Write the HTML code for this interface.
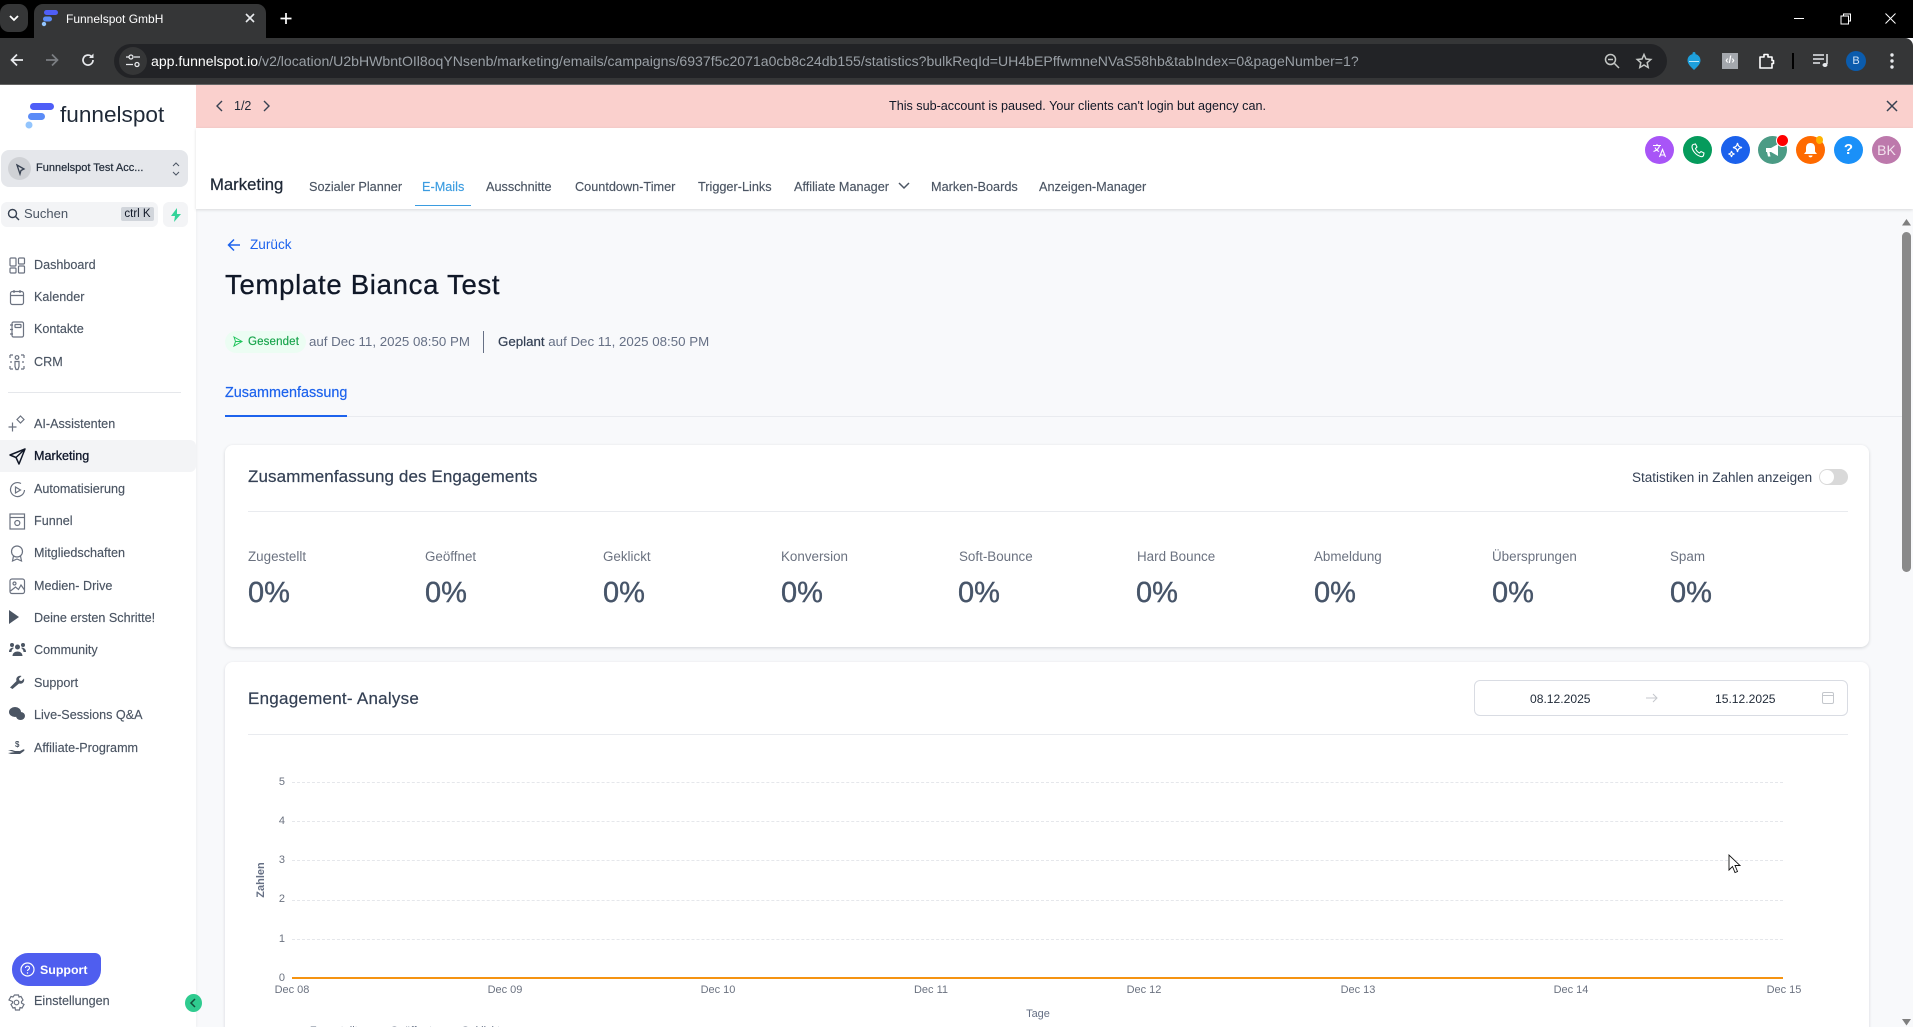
<!DOCTYPE html>
<html lang="de"><head><meta charset="utf-8"><title>Funnelspot GmbH</title>
<style>
html,body{margin:0;padding:0;width:1913px;height:1027px;overflow:hidden;background:#f8f9fb;font-family:"Liberation Sans",sans-serif}
#w{position:relative;width:1913px;height:1027px;overflow:hidden;background:#f8f9fb}
.a,.t{position:absolute}
.t{white-space:nowrap;line-height:20px}
svg{position:absolute;overflow:visible}
.n{left:34px;font-size:12.600px;color:#4b5563;-webkit-text-stroke:.15px #4b5563}
.h{top:177px;font-size:12.700px;color:#4b5563;-webkit-text-stroke:.15px #4b5563}
.l{top:547px;font-size:13.400px;color:#6b7280}
.v{top:579px;font-size:29px;color:#475569;line-height:28px;-webkit-text-stroke:.4px #475569}
.c{width:29px;height:28px;top:136px;border-radius:50%}
.y{font-size:11px;color:#6b7280;width:20px;text-align:right;left:265px}
.x{top:980px;font-size:11px;color:#6b7280;width:60px;text-align:center}
.g{left:292px;width:1491px;height:0;border-top:1px dashed #e5e7eb}
.s{fill:none;stroke:#6b7280;stroke-width:1.2}
</style></head><body><div id="w">

<!-- browser chrome -->
<div class="a" style="left:0;top:0;width:1913px;height:38px;background:#000"></div>
<div class="a" style="left:0;top:38px;width:1913px;height:46px;background:#353637;border-radius:0 8px 0 0"></div>
<div class="a" style="left:0;top:84px;width:1913px;height:1px;background:#666"></div>
<div class="a" style="left:0;top:4px;width:28px;height:28px;background:#353637;border-radius:9px"></div>
<svg style="left:0;top:0" width="30" height="38"><path d="M10 16l4 4 4-4" fill="none" stroke="#fff" stroke-width="1.8"/></svg>
<div class="a" style="left:34px;top:4px;width:232px;height:34px;background:#353637;border-radius:9px 9px 0 0"></div>
<svg style="left:40px;top:8px" width="20" height="20"><rect x="4" y="2" width="14" height="5" rx="2.5" fill="#4f5ef7"/><rect x="3" y="8.500" width="9" height="5" rx="2.500" fill="#5b8cf7"/><circle cx="4" cy="16" r="2.200" fill="#93c5fd"/></svg>
<div class="t" style="left:66px;top:9px;font-size:12px;color:#fff">Funnelspot GmbH</div>
<svg style="left:244px;top:12px" width="12" height="12"><path d="M2 2l8 8M10 2l-8 8" stroke="#e8eaed" stroke-width="1.600"/></svg>
<svg style="left:279px;top:12px" width="14" height="14"><path d="M7 1v11M1.500 6.500h11" stroke="#fff" stroke-width="1.700"/></svg>

<svg style="left:9px;top:52px" width="16" height="16"><path d="M14 8H2.500M8 2.500L2.500 8 8 13.500" fill="none" stroke="#e8eaed" stroke-width="1.700"/></svg>
<svg style="left:44px;top:52px" width="16" height="16"><path d="M2 8h11.500M8 2.500L13.500 8 8 13.500" fill="none" stroke="#7b7e82" stroke-width="1.700"/></svg>
<svg style="left:80px;top:52px" width="16" height="16"><path d="M13 8a5 5 0 1 1-1.500-3.500" fill="none" stroke="#e8eaed" stroke-width="1.700"/><path d="M13.500 1.500v4.500H9z" fill="#e8eaed"/></svg>

<div class="a" style="left:114px;top:44px;width:1553px;height:34px;background:#222326;border-radius:17px"></div>
<div class="a" style="left:119px;top:47px;width:28px;height:28px;background:#353637;border-radius:50%"></div>
<svg style="left:125px;top:53px" width="16" height="16"><path d="M1 4h3M9 4h6M1 11.500h7" stroke="#e8eaed" stroke-width="1.300"/><circle cx="6" cy="4" r="2" fill="none" stroke="#e8eaed" stroke-width="1.300"/><circle cx="12" cy="11.500" r="2" fill="none" stroke="#e8eaed" stroke-width="1.300"/></svg>
<div class="t" style="left:151px;top:51px;font-size:14.070px;color:#9aa0a6"><span style="color:#fff">app.funnelspot.io</span>/v2/location/U2bHWbntOIl8oqYNsenb/marketing/emails/campaigns/6937f5c2071a0cb8c24db155/statistics?bulkReqId=UH4bEPffwmneNVaS58hb&amp;tabIndex=0&amp;pageNumber=1?</div>
<svg style="left:1604px;top:53px" width="16" height="16"><circle cx="6.500" cy="6.500" r="5" fill="none" stroke="#c4c7c5" stroke-width="1.500"/><path d="M10.500 10.500l4.500 4.500M4 6.500h5" stroke="#c4c7c5" stroke-width="1.500"/></svg>
<svg style="left:1636px;top:53px" width="16" height="16"><path d="M8 1.500l2 4.500 4.800.5-3.600 3.200 1 4.800L8 12l-4.200 2.500 1-4.800L1.200 6.500 6 6z" fill="none" stroke="#c4c7c5" stroke-width="1.500"/></svg>
<svg style="left:1686px;top:51px" width="16" height="20"><path d="M8 3c4 0 6.500 3 6.500 6.500S11 16 8 19C5 16 1.500 13 1.500 9.500S4 3 8 3z" fill="#1ea0dc"/><circle cx="8" cy="2.500" r="1.500" fill="#1ea0dc"/><path d="M3 10.500h10" stroke="#bfe8f7" stroke-width="1"/></svg>
<div class="a" style="left:1722px;top:53px;width:16px;height:16px;background:#a4a8ad"></div>
<div class="t" style="left:1722px;top:51px;width:16px;text-align:center;font-size:10px;font-weight:bold;color:#fff">‹/›</div>
<svg style="left:1759px;top:53px" width="16" height="16"><path d="M1 4h4V1.500h4V4h4v3.500h1.500v3H13V15H1z" fill="none" stroke="#fff" stroke-width="1.600" stroke-linejoin="round"/></svg>
<div class="a" style="left:1792px;top:53px;width:2px;height:16px;background:#000"></div>
<svg style="left:1813px;top:53px" width="18" height="16"><path d="M0 2h11M0 6h11M0 10h7" stroke="#e8eaed" stroke-width="1.500"/><path d="M14 1v10" stroke="#e8eaed" stroke-width="1.500"/><ellipse cx="12" cy="12" rx="2.500" ry="2" fill="#e8eaed"/></svg>
<div class="a" style="left:1846px;top:51px;width:20px;height:20px;background:#0b5cad;border-radius:50%;color:#cfe3f7;font-size:11px;line-height:20px;text-align:center">B</div>
<svg style="left:1889px;top:52px" width="6" height="18"><circle cx="3" cy="3" r="1.700" fill="#e8eaed"/><circle cx="3" cy="9" r="1.700" fill="#e8eaed"/><circle cx="3" cy="15" r="1.700" fill="#e8eaed"/></svg>
<div class="a" style="left:1794px;top:18px;width:10px;height:1px;background:#fff"></div>
<svg style="left:1840px;top:13px" width="12" height="12"><path d="M3.500 3V1h7v7H8.500M1 3h7.500v8H1z" fill="none" stroke="#fff"/></svg>
<svg style="left:1885px;top:13px" width="12" height="12"><path d="M.5.500l10 10M10.500.500l-10 10" stroke="#fff"/></svg>

<!-- sidebar -->
<div class="a" style="left:0;top:85px;width:196px;height:942px;background:#fff;box-shadow:1px 0 2px rgba(0,0,0,.04)"></div>
<svg style="left:25px;top:101px" width="28" height="28"><rect x="5" y="2" width="24" height="7" rx="3.500" fill="#4f5ef7"/><rect x="3" y="12" width="17" height="7" rx="3.500" fill="#5b8cf7"/><circle cx="4" cy="24" r="3.500" fill="#93c5fd"/></svg>
<div class="t" style="left:60px;top:100px;line-height:30px;font-size:22.600px;color:#1f2937">funnelspot</div>
<div class="a" style="left:1px;top:150px;width:187px;height:37px;background:#e5e7eb;border-radius:8px"></div>
<div class="a" style="left:8px;top:157px;width:23px;height:23px;background:#cfd1d5;border-radius:50%"></div>
<svg style="left:14px;top:163px" width="12" height="12"><path d="M3 2l7 4-3 1.500L6 11z" fill="none" stroke="#374151" stroke-width="1.300"/></svg>
<div class="t" style="left:36px;top:158px;font-size:11px;color:#1f2937;-webkit-text-stroke:.2px #1f2937">Funnelspot Test Acc...</div>
<svg style="left:171px;top:161px" width="10" height="16"><path d="M2 5l3-3 3 3M2 11l3 3 3-3" fill="none" stroke="#4b5563" stroke-width="1"/></svg>

<div class="a" style="left:1px;top:202px;width:157px;height:25px;background:#f3f4f6;border-radius:6px"></div>
<svg style="left:7px;top:208px" width="13" height="13"><circle cx="5.500" cy="5.500" r="4" fill="none" stroke="#374151" stroke-width="1.400"/><path d="M8.500 8.500l3.500 3.500" stroke="#374151" stroke-width="1.400"/></svg>
<div class="t" style="left:24px;top:204px;font-size:13px;color:#4b5563">Suchen</div>
<div class="a" style="left:121px;top:207px;width:33px;height:14px;background:#d1d5db;border-radius:2px;font-size:11.500px;line-height:14px;color:#111827;text-align:center">ctrl K</div>
<div class="a" style="left:163px;top:202px;width:25px;height:25px;background:#f3f4f6;border-radius:6px"></div>
<svg style="left:170px;top:208px" width="12" height="14"><path d="M7 0L1 8h4l-1 6 7-8H7z" fill="#34d399"/></svg>

<div class="t n" style="top:255px">Dashboard</div>
<svg style="left:9px;top:257px" width="17" height="17"><g class="s"><rect x="1" y="1" width="6" height="8" rx="1"/><rect x="9.500" y="1" width="6" height="6" rx="1"/><rect x="1" y="11" width="6" height="5" rx="1"/><rect x="9.500" y="9" width="6" height="7" rx="1"/></g></svg>
<div class="t n" style="top:287px">Kalender</div>
<svg style="left:9px;top:289px" width="17" height="17"><g class="s"><rect x="1.500" y="2.500" width="13" height="13" rx="2"/><path d="M1.500 6.500h13M5 1v3M11 1v3"/></g></svg>
<div class="t n" style="top:319px">Kontakte</div>
<svg style="left:9px;top:321px" width="17" height="17"><g class="s"><rect x="3" y="1" width="11.500" height="15" rx="1.500"/><rect x="6" y="3.500" width="6" height="3" rx=".5"/><path d="M1 4h3M1 8.500h3M1 13h3"/></g></svg>
<div class="t n" style="top:352px">CRM</div>
<svg style="left:9px;top:354px" width="17" height="17"><g class="s"><circle cx="8" cy="3.500" r="1.800"/><path d="M6 7.500h4v5l-1 3H7l-1-3zM1 1h3M1 1v3M12 1h3M15 1v3M1 15h3M1 15v-3M15 15h-3M15 15v-3M1 8h2M13 8h2"/></g></svg>

<div class="a" style="left:8px;top:392px;width:173px;height:1px;background:#e5e7eb"></div>

<div class="t n" style="top:414px">AI-Assistenten</div>
<svg style="left:8px;top:415px" width="18" height="18"><g class="s"><path d="M12.500 1l3.500 3.500-3.500 3.500L9 4.500z"/><path d="M4.500 7.500v9M.5 12h8"/></g></svg>
<div class="a" style="left:0;top:440px;width:196px;height:32px;background:#f3f4f6;border-radius:0 6px 6px 0"></div>
<div class="t n" style="top:446px;color:#0f172a;-webkit-text-stroke:.3px #0f172a">Marketing</div>
<svg style="left:9px;top:448px" width="17" height="17"><path d="M16 1L1 7l6 2.500L10 16zM7 9.500L16 1" fill="none" stroke="#111827" stroke-width="1.500" stroke-linejoin="round"/></svg>
<div class="t n" style="top:479px">Automatisierung</div>
<svg style="left:9px;top:481px" width="17" height="17"><g class="s"><path d="M12 2.500A7 7 0 1 0 15.500 9"/><path d="M6.500 6l5 3-5 3z"/></g></svg>
<div class="t n" style="top:511px">Funnel</div>
<svg style="left:9px;top:513px" width="17" height="17"><g class="s"><rect x="1" y="1" width="14.500" height="15"/><path d="M1 4.500h14.500"/><circle cx="8.300" cy="10" r="2.500"/></g></svg>
<div class="t n" style="top:543px">Mitgliedschaften</div>
<svg style="left:9px;top:545px" width="17" height="17"><g class="s"><circle cx="8" cy="6.500" r="5.500"/><path d="M4.500 11l-1 5 4.500-2 4.500 2-1-5"/></g></svg>
<div class="t n" style="top:576px">Medien- Drive</div>
<svg style="left:9px;top:578px" width="17" height="17"><g class="s"><rect x="1" y="1" width="14.500" height="14.500" rx="2"/><circle cx="5.500" cy="5.500" r="1.500"/><path d="M1.500 13l5-4 3 2.500 2.500-4.500 3.500 5"/></g></svg>
<div class="t n" style="top:608px">Deine ersten Schritte!</div>
<svg style="left:9px;top:610px" width="12" height="14"><path d="M0 0l10 7-10 7z" fill="#4b5563"/></svg>
<div class="t n" style="top:640px">Community</div>
<svg style="left:9px;top:642px" width="17" height="15"><g fill="#4b5563"><circle cx="8.500" cy="5" r="2.500"/><circle cx="3" cy="3" r="2"/><circle cx="14" cy="3" r="2"/><path d="M3.500 14c0-6 10-6 10 0zM0 10c0-4 4-5 5-4-2 1-2.500 3-2.500 4zM17 10c0-4-4-5-5-4 2 1 2.500 3 2.500 4z"/></g></svg>
<div class="t n" style="top:673px">Support</div>
<svg style="left:9px;top:674px" width="15" height="15"><path d="M1 13.500l6.500-6.500c-1-3 1.500-6 5-5l-2.500 2.500.5 2 2 .5 2.500-2.500c1 3.500-2 6-5 5L3.500 15z" fill="#4b5563"/></svg>
<div class="t n" style="top:705px">Live-Sessions Q&amp;A</div>
<svg style="left:9px;top:707px" width="16" height="14"><g fill="#4b5563"><ellipse cx="6" cy="5" rx="6" ry="5"/><ellipse cx="11.500" cy="9" rx="4.500" ry="4"/></g></svg>
<div class="t n" style="top:738px">Affiliate-Programm</div>
<svg style="left:8px;top:739px" width="17" height="16"><path d="M0 11h4l3 1h4c1 0 1 1 0 1.500H7.500M11 12.500l4-2c1.500-.5 2 .5 1 1.500l-4 3H3l-3-1z" fill="#4b5563"/><text x="7" y="8" font-size="8" font-weight="bold" fill="#4b5563" font-family="Liberation Sans">$</text></svg>

<div class="a" style="left:12px;top:953px;width:89px;height:33px;background:#4f5eef;border-radius:16px 6px 16px 16px"></div>
<svg style="left:20px;top:962px" width="15" height="15"><circle cx="7.500" cy="7.500" r="6.500" fill="none" stroke="#fff" stroke-width="1.200"/><path d="M5.500 6c0-2.500 4-2.500 4 0 0 1.500-2 1.500-2 3" fill="none" stroke="#fff" stroke-width="1.100"/><circle cx="7.500" cy="11" r=".7" fill="#fff"/></svg>
<div class="t" style="left:40px;top:960px;font-size:12.400px;font-weight:bold;color:#fff">Support</div>
<div class="t n" style="top:991px">Einstellungen</div>
<svg style="left:8px;top:994px" width="17" height="17"><g class="s"><path d="M6.500 1h4l.5 2 2-.5 2 3.500-1.500 1.500v1.500L16 10.500l-2 3.500-2-.5-.5 2.500h-4l-.5-2.500-2 .5-2-3.500 1.500-1.500V7.500L1 6l2-3.500 2 .5z"/><circle cx="8.500" cy="8.500" r="2.300"/></g></svg>
<div class="a" style="left:185px;top:994px;width:17px;height:18px;background:#2fcb8f;border-radius:50%"></div>
<svg style="left:189px;top:998px" width="8" height="10"><path d="M6 1L2 5l4 4" fill="none" stroke="#134e3a" stroke-width="1.500"/></svg>

<!-- banner -->
<div class="a" style="left:196px;top:85px;width:1717px;height:43px;background:#fad0cd"></div>
<svg style="left:214px;top:99px" width="12" height="14"><path d="M8 2L3 7l5 5" fill="none" stroke="#374151" stroke-width="1.400"/></svg>
<div class="t" style="left:234px;top:96px;font-size:12.500px;color:#1f2937">1/2</div>
<svg style="left:261px;top:99px" width="12" height="14"><path d="M3 2l5 5-5 5" fill="none" stroke="#374151" stroke-width="1.400"/></svg>
<div class="t" style="left:889px;top:96px;font-size:12.600px;color:#111827">This sub-account is paused. Your clients can't login but agency can.</div>
<svg style="left:1886px;top:100px" width="12" height="12"><path d="M1 1l10 10M11 1L1 11" stroke="#374151" stroke-width="1.500"/></svg>

<!-- header -->
<div class="a" style="left:196px;top:128px;width:1717px;height:81px;background:#fff;box-shadow:0 1px 3px rgba(0,0,0,.13)"></div>
<div class="t" style="left:210px;top:175px;font-size:16.700px;color:#1f2937;-webkit-text-stroke:.25px #1f2937">Marketing</div>
<div class="t h" style="left:309px">Sozialer Planner</div>
<div class="t h" style="left:422px;color:#3b9ce0;-webkit-text-stroke:.15px #3b9ce0">E-Mails</div>
<div class="a" style="left:415px;top:205px;width:56px;height:1px;background:#3b9ce0"></div>
<div class="t h" style="left:486px">Ausschnitte</div>
<div class="t h" style="left:575px">Countdown-Timer</div>
<div class="t h" style="left:698px">Trigger-Links</div>
<div class="t h" style="left:794px">Affiliate Manager</div>
<svg style="left:898px;top:182px" width="12" height="8"><path d="M1 1l5 5 5-5" fill="none" stroke="#4b5563" stroke-width="1.500"/></svg>
<div class="t h" style="left:931px">Marken-Boards</div>
<div class="t h" style="left:1039px">Anzeigen-Manager</div>

<div class="a c" style="left:1645px;background:#a855f7"></div>
<div class="a c" style="left:1683px;background:#059b5c"></div>
<div class="a c" style="left:1721px;background:#1b61ec"></div>
<div class="a c" style="left:1758px;background:#4b9b85"></div>
<div class="a c" style="left:1796px;background:#ff6a00"></div>
<div class="a c" style="left:1834px;background:#1a90f8"></div>
<div class="a c" style="left:1872px;background:#bd79ac"></div>
<svg style="left:1652px;top:143px" width="16" height="15"><path d="M1 2.500h8M5 1v1.500M7.500 2.500C7 5.500 4.500 7.500 1.500 8.500M3 4.500c1 2 2.500 3.500 4 4" fill="none" stroke="#fff" stroke-width="1.100"/><path d="M7.500 14l3-7.500 3 7.500M8.500 12h4" fill="none" stroke="#fff" stroke-width="1.100"/></svg>
<svg style="left:1691px;top:143px" width="14" height="15"><path d="M2 1.500l2.500-.5 1.500 3-1.500 1.500c.7 2 2 3.500 4 4.500l1.500-1.500 3 1.500-.5 2.500c-.5 1-1.500 1.500-3 1C5 12 1.500 8 1 4c0-1 .4-2 1-2.500z" fill="none" stroke="#fff" stroke-width="1.100"/></svg>
<svg style="left:1727px;top:142px" width="17" height="17"><path d="M10.500 1c.5 3 1.500 4 4.500 4.500-3 .5-4 1.500-4.500 4.500C10 7 9 6 6 5.500 9 5 10 4 10.500 1zM4.500 9c.3 2 1 2.700 3 3-2 .3-2.700 1-3 3-.3-2-1-2.700-3-3 2-.3 2.700-1 3-3z" fill="none" stroke="#fff" stroke-width="1.200"/></svg>
<svg style="left:1765px;top:143px" width="16" height="15"><path d="M1 5h5l7-4v12L6 9H4.500l1 4.500H3L2 9H1z" fill="#fff"/></svg>
<div class="a" style="left:1776px;top:134px;width:11px;height:11px;background:#f00;border-radius:50%;border:1px solid #fff"></div>
<svg style="left:1803px;top:142px" width="15" height="17"><path d="M7.500 1c3 0 4.500 2 4.500 5v3.500l2 2.500H1l2-2.500V6c0-3 1.500-5 4.500-5zM5.500 13.500h4c0 2.500-4 2.500-4 0z" fill="#fff"/></svg>
<div class="a" style="left:1816px;top:136px;width:7px;height:8px;background:#ffb300;border-radius:50%"></div>
<div class="t" style="left:1834px;top:140px;width:29px;text-align:center;font-size:15px;font-weight:bold;color:#fff">?</div>
<div class="t" style="left:1872px;top:140px;width:29px;text-align:center;font-size:14px;color:#f3e3ee">BK</div>

<!-- content -->
<svg style="left:227px;top:238px" width="14" height="14"><path d="M13 7H1.500M7 1.500L1.500 7 7 12.500" fill="none" stroke="#1d63ed" stroke-width="1.500"/></svg>
<div class="t" style="left:250px;top:235px;font-size:13.600px;color:#1d63ed">Zurück</div>
<div class="t" style="left:225px;top:265px;line-height:40px;font-size:27.500px;letter-spacing:.72px;color:#101828;-webkit-text-stroke:.3px #101828">Template Bianca Test</div>

<div class="a" style="left:225px;top:331px;width:81px;height:22px;background:#ecfdf3;border-radius:11px"></div>
<svg style="left:233px;top:336px" width="10" height="11"><path d="M1 1l8 4.500-8 4.500 1.500-4.500zM2.500 5.500H9" fill="none" stroke="#22c55e" stroke-width="1"/></svg>
<div class="t" style="left:248px;top:332px;font-size:11.500px;color:#16a34a;letter-spacing:.15px;-webkit-text-stroke:.15px #16a34a">Gesendet</div>
<div class="t" style="left:309px;top:332px;font-size:13.300px;color:#667085">auf Dec 11, 2025 08:50 PM</div>
<div class="a" style="left:483px;top:331px;width:1px;height:22px;background:#667085"></div>
<div class="t" style="left:498px;top:332px;font-size:13.300px;color:#667085"><span style="color:#344054;-webkit-text-stroke:.2px #344054">Geplant</span> auf Dec 11, 2025 08:50 PM</div>

<div class="t" style="left:225px;top:383px;font-size:14.400px;color:#1d63ed;-webkit-text-stroke:.2px #1d63ed">Zusammenfassung</div>
<div class="a" style="left:225px;top:416px;width:1680px;height:1px;background:#e9ebef"></div>
<div class="a" style="left:225px;top:415px;width:122px;height:2px;background:#1d63ed"></div>

<!-- card 1 -->
<div class="a" style="left:225px;top:445px;width:1644px;height:202px;background:#fff;border-radius:8px;box-shadow:0 1px 3px rgba(16,24,40,.16)"></div>
<div class="t" style="left:248px;top:467px;font-size:17px;letter-spacing:.1px;color:#344054;-webkit-text-stroke:.2px #344054">Zusammenfassung des Engagements</div>
<div class="t" style="left:1632px;top:468px;font-size:13.500px;color:#344054">Statistiken in Zahlen anzeigen</div>
<div class="a" style="left:1819px;top:469px;width:29px;height:16px;background:#d9d9d9;border-radius:8px"></div>
<div class="a" style="left:1820px;top:470px;width:14px;height:14px;background:#fff;border-radius:50%"></div>
<div class="a" style="left:248px;top:511px;width:1600px;height:1px;background:#e9ebef"></div>
<div class="t l" style="left:248px">Zugestellt</div><div class="t v" style="left:248px">0%</div>
<div class="t l" style="left:425px">Geöffnet</div><div class="t v" style="left:425px">0%</div>
<div class="t l" style="left:603px">Geklickt</div><div class="t v" style="left:603px">0%</div>
<div class="t l" style="left:781px">Konversion</div><div class="t v" style="left:781px">0%</div>
<div class="t l" style="left:959px">Soft-Bounce</div><div class="t v" style="left:958px">0%</div>
<div class="t l" style="left:1137px">Hard Bounce</div><div class="t v" style="left:1136px">0%</div>
<div class="t l" style="left:1314px">Abmeldung</div><div class="t v" style="left:1314px">0%</div>
<div class="t l" style="left:1492px">Übersprungen</div><div class="t v" style="left:1492px">0%</div>
<div class="t l" style="left:1670px">Spam</div><div class="t v" style="left:1670px">0%</div>

<!-- card 2 -->
<div class="a" style="left:225px;top:662px;width:1644px;height:380px;background:#fff;border-radius:8px;box-shadow:0 1px 3px rgba(16,24,40,.14)"></div>
<div class="t" style="left:248px;top:689px;font-size:17px;letter-spacing:.25px;color:#344054;-webkit-text-stroke:.2px #344054">Engagement- Analyse</div>
<div class="a" style="left:1474px;top:680px;width:372px;height:34px;background:#fff;border:1px solid #d9dce3;border-radius:6px"></div>
<div class="t" style="left:1530px;top:689px;font-size:12.100px;color:#1f2937">08.12.2025</div>
<svg style="left:1646px;top:693px" width="12" height="10"><path d="M0 5h11M7 1l4 4-4 4" fill="none" stroke="#c4c7cc"/></svg>
<div class="t" style="left:1715px;top:689px;font-size:12.100px;color:#1f2937">15.12.2025</div>
<svg style="left:1822px;top:692px" width="12" height="12"><rect x=".5" y=".5" width="11" height="11" rx="1.500" fill="none" stroke="#c4c7cc"/><path d="M.5 3.500h11" stroke="#c4c7cc"/></svg>
<div class="a" style="left:248px;top:734px;width:1600px;height:1px;background:#e9ebef"></div>

<div class="a g" style="top:782px"></div><div class="a g" style="top:821px"></div><div class="a g" style="top:860px"></div><div class="a g" style="top:900px"></div><div class="a g" style="top:939px"></div>
<div class="a" style="left:292px;top:977px;width:1491px;height:2px;background:#f59311"></div>
<div class="t y" style="top:772px">5</div><div class="t y" style="top:811px">4</div><div class="t y" style="top:850px">3</div><div class="t y" style="top:889px">2</div><div class="t y" style="top:929px">1</div><div class="t y" style="top:968px">0</div>
<div class="t" style="left:236px;top:870px;width:50px;text-align:center;font-size:11px;font-weight:bold;color:#667085;transform:rotate(-90deg)">Zahlen</div>
<div class="t x" style="left:262px">Dec 08</div><div class="t x" style="left:475px">Dec 09</div><div class="t x" style="left:688px">Dec 10</div><div class="t x" style="left:901px">Dec 11</div><div class="t x" style="left:1114px">Dec 12</div><div class="t x" style="left:1328px">Dec 13</div><div class="t x" style="left:1541px">Dec 14</div><div class="t x" style="left:1754px">Dec 15</div>
<div class="t" style="left:1008px;top:1004px;width:60px;text-align:center;font-size:11px;color:#667085">Tage</div>
<div class="t" style="left:310px;top:1025px;font-size:11px;color:#667085;line-height:13px">Zugestellt</div>
<div class="t" style="left:390px;top:1025px;font-size:11px;color:#667085;line-height:13px">Geöffnet</div>
<div class="t" style="left:461px;top:1025px;font-size:11px;color:#667085;line-height:13px">Geklickt</div>

<!-- cursor -->
<svg style="left:1728px;top:854px" width="13" height="20"><path d="M1 1v15l3.500-3.500 2.500 6 2.500-1-2.500-6h5z" fill="#fff" stroke="#111" stroke-width=".9"/></svg>

<!-- scrollbar -->
<svg style="left:1901px;top:218px" width="11" height="9"><path d="M5.500 1l4.500 6.500H1z" fill="#7f7f7f"/></svg>
<div class="a" style="left:1902px;top:232px;width:9px;height:340px;background:#8a8a8a;border-radius:5px"></div>
<svg style="left:1901px;top:1018px" width="11" height="9"><path d="M1 1h9L5.500 7.500z" fill="#7f7f7f"/></svg>
</div></body></html>
